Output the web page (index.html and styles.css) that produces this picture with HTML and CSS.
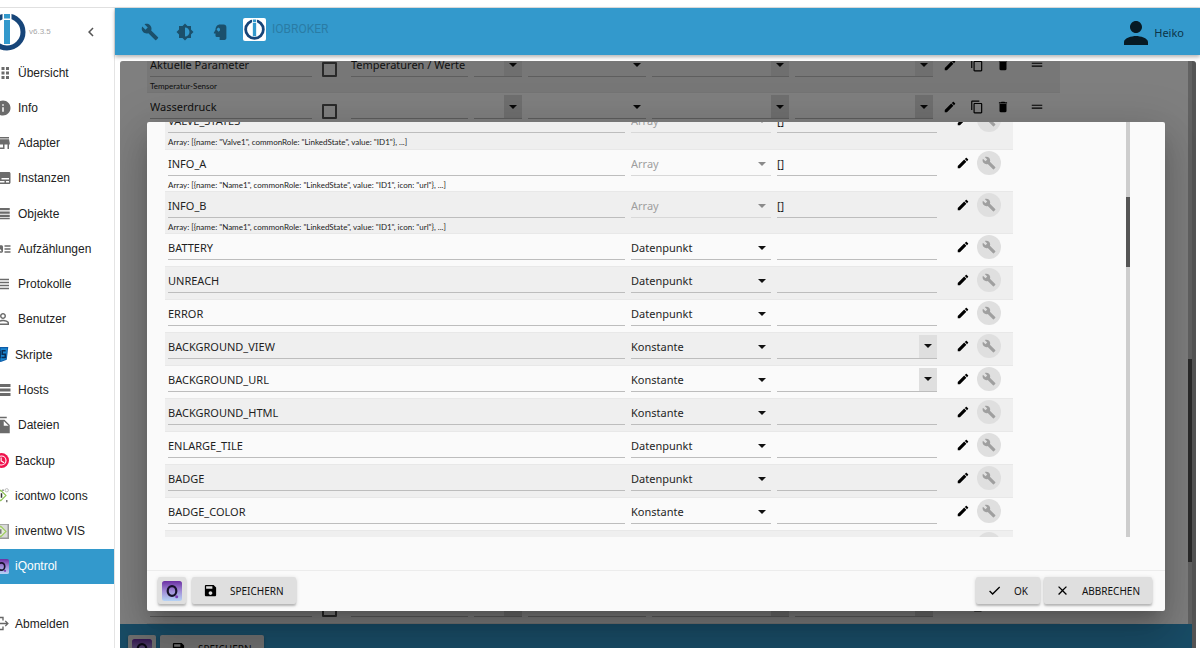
FILE: index.html
```html
<!DOCTYPE html>
<html lang="de">
<head>
<meta charset="utf-8">
<title>ioBroker – iQontrol</title>
<link rel="stylesheet" href="styles.css">
</head>
<body>
<svg class="sprite" aria-hidden="true">
  <defs>
    <linearGradient id="violet" x1="0" y1="0" x2="0" y2="1"><stop offset="0" stop-color="#6b2fa3"/><stop offset=".5" stop-color="#a08bd6"/><stop offset="1" stop-color="#b5d3f5"/></linearGradient>
  </defs>
  <symbol id="wrench" viewBox="0 0 24 24"><path d="M22.7 19l-9.1-9.1c.9-2.3.4-5-1.5-6.9-2-2-5-2.4-7.4-1.3L9 6 6 9 1.6 4.7C.4 7.1.9 10.1 2.9 12.1c1.9 1.9 4.6 2.4 6.9 1.5l9.1 9.1c.4.4 1 .4 1.4 0l2.3-2.3c.5-.4.5-1.1.1-1.4z"/></symbol>
  <symbol id="pencil" viewBox="0 0 24 24"><path d="M3 17.25V21h3.75L17.81 9.94l-3.75-3.75L3 17.25zM20.71 7.04c.39-.39.39-1.02 0-1.41l-2.34-2.34c-.39-.39-1.02-.39-1.41 0l-1.83 1.83 3.75 3.75 1.83-1.83z"/></symbol>
  <symbol id="copy" viewBox="0 0 24 24"><path d="M16 1H4c-1.1 0-2 .9-2 2v14h2V3h12V1zm3 4H8c-1.1 0-2 .9-2 2v14c0 1.1.9 2 2 2h11c1.1 0 2-.9 2-2V7c0-1.1-.9-2-2-2zm0 16H8V7h11v14z"/></symbol>
  <symbol id="trash" viewBox="0 0 24 24"><path d="M6 19c0 1.1.9 2 2 2h8c1.1 0 2-.9 2-2V7H6v12zM19 4h-3.500l-1-1h-5l-1 1H5v2h14V4z"/></symbol>
  <symbol id="drag" viewBox="0 0 24 24"><path d="M21 8H3v2h18V8zM3 15h18v-2H3v2z"/></symbol>
  <symbol id="save" viewBox="0 0 24 24"><path d="M17 3H5c-1.110 0-2 .9-2 2v14c0 1.100.890 2 2 2h14c1.100 0 2-.9 2-2V7l-4-4zm-5 16c-1.660 0-3-1.340-3-3s1.340-3 3-3 3 1.340 3 3-1.340 3-3 3zm3-10H5V5h10v4z"/></symbol>
  <symbol id="check" viewBox="0 0 24 24"><path d="M9 16.170L4.830 12l-1.420 1.410L9 19 21 7l-1.410-1.410z"/></symbol>
  <symbol id="close" viewBox="0 0 24 24"><path d="M19 6.410L17.590 5 12 10.590 6.410 5 5 6.410 10.590 12 5 17.590 6.410 19 12 13.410 17.590 19 19 17.590 13.410 12z"/></symbol>
  <symbol id="person" viewBox="0 0 24 24"><path d="M12 12c2.210 0 4-1.790 4-4s-1.790-4-4-4-4 1.790-4 4 1.790 4 4 4zm0 2c-2.670 0-8 1.340-8 4v2h16v-2c0-2.660-5.330-4-8-4z"/></symbol>
  <symbol id="iobroker" viewBox="0 0 38 38"><circle cx="19" cy="19" r="16" fill="none" stroke="#174579" stroke-width="5"/><path d="M14.500 0h9v30h-9z" fill="#fff"/><path d="M16 1h6v4.500h-6zM16 7h6v24h-6z" fill="#3399cc"/></symbol>
  <symbol id="iqontrol" viewBox="0 0 20 20"><rect width="20" height="20" rx="2.500" fill="url(#violet)"/><ellipse cx="10" cy="10" rx="4.300" ry="4.900" fill="none" stroke="#17122b" stroke-width="2.200"/><circle cx="14.700" cy="15.800" r="1.500" fill="#7a3fb5"/></symbol>
</svg>

<div class="topline"></div>
<div class="app">
  <aside class="side">
    <div class="brand">
      <svg class="brand-logo"><use href="#iobroker"/></svg>
      <span class="version">v6.3.5</span>
      <button class="collapse" aria-label="Menü schließen"><svg viewBox="0 0 24 24"><path d="M15.410 7.410L14 6l-6 6 6 6 1.410-1.410L10.830 12z"/></svg></button>
    </div>
    <nav class="nav">
      <a href="#"><svg viewBox="0 0 24 24"><path d="M4 4h4v4H4zM10 4h4v4h-4zM16 4h4v4h-4zM4 10h4v4H4zM10 10h4v4h-4zM16 10h4v4h-4zM4 16h4v4H4zM10 16h4v4h-4zM16 16h4v4h-4z"/></svg>Übersicht</a>
      <a href="#"><svg viewBox="0 0 24 24"><path d="M12 2C6.480 2 2 6.480 2 12s4.480 10 10 10 10-4.480 10-10S17.520 2 12 2zm1 15h-2v-6h2v6zm0-8h-2V7h2v2z"/></svg>Info</a>
      <a href="#"><svg viewBox="0 0 24 24"><path d="M20 4H4v2h16V4zm1 10v-2l-1-5H4l-1 5v2h1v6h10v-6h4v6h2v-6h1zm-9 4H6v-4h6v4z"/></svg>Adapter</a>
      <a href="#"><svg viewBox="0 0 24 24"><path d="M20 4H4c-1.100 0-2 .9-2 2v12c0 1.100.9 2 2 2h16c1.100 0 2-.9 2-2V6c0-1.100-.9-2-2-2zM4 12h4v2H4v-2zm10 6H4v-2h10v2zm6 0h-4v-2h4v2zm0-4H10v-2h10v2z"/></svg>Instanzen</a>
      <a href="#"><svg viewBox="0 0 24 24"><path d="M2 4h19v3H2zM2 8.500h19v3H2zM2 13h19v3H2zM2 17h19v2H2z"/></svg>Objekte</a>
      <a href="#"><svg viewBox="0 0 24 24"><path d="M22 13h-8v-2h8v2zm0-6h-8v2h8V7zm-8 10h8v-2h-8v2zm-2-8v6c0 1.100-.9 2-2 2H4c-1.100 0-2-.9-2-2V9c0-1.100.9-2 2-2h6c1.100 0 2 .9 2 2zm-1.500 6l-2.250-3-1.750 2.260-1.250-1.510L3.500 15h7z"/></svg>Aufzählungen</a>
      <a href="#"><svg viewBox="0 0 24 24"><path d="M4 15h16v-2H4v2zm0 4h16v-2H4v2zm0-8h16V9H4v2zm0-6v2h16V5H4z"/></svg>Protokolle</a>
      <a href="#"><svg viewBox="0 0 24 24"><path d="M12 5.900c1.160 0 2.100.940 2.100 2.100s-.940 2.100-2.100 2.100S9.900 9.160 9.900 8s.940-2.100 2.100-2.100m0 9c2.970 0 6.100 1.460 6.100 2.100v1.100H5.900V17c0-.640 3.130-2.100 6.100-2.100M12 4C9.790 4 8 5.790 8 8s1.790 4 4 4 4-1.790 4-4-1.790-4-4-4zm0 9c-2.670 0-8 1.340-8 4v3h16v-3c0-2.660-5.330-4-8-4z"/></svg>Benutzer</a>
      <a href="#" class="plugin"><svg viewBox="0 0 20 20"><path d="M0 0h19l-2 17-8 3-8-3z" fill="#0d5ca8"/><path d="M9 1.500h8.500l-1.500 14.500-7 2.500z" fill="#1b86d0"/><path d="M15.500 5h-4.500v4.500h4v4.500h-5M8 5v9H4" fill="none" stroke="#0b2c55" stroke-width="2"/></svg>Skripte</a>
      <a href="#"><svg viewBox="0 0 24 24"><path d="M2 4h20v4H2zM2 10h20v4H2zM2 16h20v4H2z"/></svg>Hosts</a>
      <a href="#"><svg viewBox="0 0 24 24"><path d="M4 1h13v2H4zM4 5h10l7 7v11H4zM13 6.500V13h6.500z" fill-rule="evenodd"/></svg>Dateien</a>
      <a href="#" class="plugin"><svg viewBox="0 0 20 20"><circle cx="10" cy="10" r="10" fill="#f0134d"/><circle cx="10" cy="10" r="6" fill="none" stroke="#fff" stroke-width="1.500"/><path d="M9.500 6v4.500l4 2.500" fill="none" stroke="#fff" stroke-width="1.500"/></svg>Backup</a>
      <a href="#" class="plugin"><svg viewBox="0 0 20 20"><path d="M1 10l8-7 7 7-7 7z" fill="#fff" stroke="#8cc152" stroke-width="1.500"/><path d="M10 7v6" stroke="#333" stroke-width="2"/><circle cx="17" cy="3" r="2.200" fill="none" stroke="#aaa" stroke-width="1"/><path d="M16 16h2v3h-2zM11 2h2v2h-2z" fill="#777"/></svg>icontwo Icons</a>
      <a href="#" class="plugin"><svg viewBox="0 0 20 20"><path d="M0 0h20v20H0z" fill="#999"/><path d="M0 1h18v17H0z" fill="#d9d9d9"/><path d="M1 10l8-7 7 7-7 7z" fill="#e6eadf" stroke="#9ccc5a" stroke-width="1.500"/><path d="M9 7v6" stroke="#777" stroke-width="2"/></svg>inventwo VIS</a>
      <a href="#" class="plugin active" aria-current="page"><svg><use href="#iqontrol"/></svg>iQontrol</a>
    </nav>
    <a href="#" class="logout plugin"><svg viewBox="0 0 20 20"><path d="M12 6V2H1v16h11v-4M7 10h11M15 6.500l3.500 3.500-3.500 3.500" fill="none" stroke="#666" stroke-width="1.800"/></svg>Abmelden</a>
  </aside>

  <main class="main">
    <header class="bar">
      <button class="tool" aria-label="Systemeinstellungen"><svg><use href="#wrench"/></svg></button>
      <button class="tool" aria-label="Farbschema"><svg viewBox="0 0 24 24"><path d="M20 15.310L23.310 12 20 8.690V4h-4.690L12 .690 8.690 4H4v4.690L.690 12 4 15.310V20h4.690L12 23.310 15.310 20H20v-4.690zM12 18V6c3.310 0 6 2.690 6 6s-2.690 6-6 6z"/></svg></button>
      <button class="tool" aria-label="Expertenmodus"><svg viewBox="0 0 24 24"><path fill-rule="evenodd" d="M12 2h5c2 0 3.500 1.500 3.500 3.500V20c0 1.500-1 2.500-2.500 2.500h-6.500v-4H7.500c-1 0-1.500-.5-1.500-1.500v-3H4.500c-.7 0-1-.6-.7-1.100L6 9C6 5 8.500 2 12 2zM8.500 7l-1 1.500 1 1.500 1.500 1.500L12 10V7.500L10 6z"/></svg></button>
      <a href="#" class="home"><svg><use href="#iobroker"/></svg></a>
      <span class="product">IOBROKER</span>
      <a href="#" class="user"><svg><use href="#person"/></svg>Heiko</a>
    </header>

    <div class="frame">
      <div class="page">
        <div class="devices">
          <table class="dev">
            <colgroup><col><col class="c-check"><col class="c-role"><col class="c-short"><col class="c-sel"><col class="c-wide"><col class="c-wider"><col class="c-edit"><col class="c-act"><col class="c-act"><col class="c-drag"></colgroup>
            <tr class="odd noted">
              <td><input aria-label="Name" value="Aktuelle Parameter"><small>Temperatur-Sensor</small></td>
              <td><input type="checkbox" aria-label="Auswahl"></td>
              <td><input aria-label="Rolle" value="Temperaturen / Werte"></td>
              <td><div class="combo"><input aria-label="Symbol"><button aria-label="Öffnen"></button></div></td>
              <td><div class="pick"><select aria-label="Typ"><option></option></select></div></td>
              <td><div class="combo"><input aria-label="Hintergrund"><button aria-label="Öffnen"></button></div></td>
              <td><div class="combo"><input aria-label="Aktiv"><button aria-label="Öffnen"></button></div></td>
              <td><button class="ico" aria-label="Bearbeiten"><svg><use href="#pencil"/></svg></button></td>
              <td><button class="ico" aria-label="Kopieren"><svg><use href="#copy"/></svg></button></td>
              <td><button class="ico" aria-label="Löschen"><svg><use href="#trash"/></svg></button></td>
              <td><button class="ico" aria-label="Verschieben"><svg><use href="#drag"/></svg></button></td>
            </tr>
            <tr class="noted">
              <td><input aria-label="Name" value="Wasserdruck"></td>
              <td><input type="checkbox" aria-label="Auswahl"></td>
              <td><input aria-label="Rolle"></td>
              <td><div class="combo"><input aria-label="Symbol"><button aria-label="Öffnen"></button></div></td>
              <td><div class="pick"><select aria-label="Typ"><option></option></select></div></td>
              <td><div class="combo"><input aria-label="Hintergrund"><button aria-label="Öffnen"></button></div></td>
              <td><div class="combo"><input aria-label="Aktiv"><button aria-label="Öffnen"></button></div></td>
              <td><button class="ico" aria-label="Bearbeiten"><svg><use href="#pencil"/></svg></button></td>
              <td><button class="ico" aria-label="Kopieren"><svg><use href="#copy"/></svg></button></td>
              <td><button class="ico" aria-label="Löschen"><svg><use href="#trash"/></svg></button></td>
              <td><button class="ico" aria-label="Verschieben"><svg><use href="#drag"/></svg></button></td>
            </tr>
          </table>
          <table class="dev">
            <colgroup><col><col class="c-check"><col class="c-role"><col class="c-short"><col class="c-sel"><col class="c-wide"><col class="c-wider"><col class="c-edit"><col class="c-act"><col class="c-act"><col class="c-drag"></colgroup>
            <tr>
              <td><input aria-label="Name"></td>
              <td><input type="checkbox" aria-label="Auswahl"></td>
              <td><input aria-label="Rolle"></td>
              <td><div class="combo"><input aria-label="Symbol"><button aria-label="Öffnen"></button></div></td>
              <td><div class="pick"><select aria-label="Typ"><option></option></select></div></td>
              <td><div class="combo"><input aria-label="Hintergrund"><button aria-label="Öffnen"></button></div></td>
              <td><div class="combo"><input aria-label="Aktiv"><button aria-label="Öffnen"></button></div></td>
              <td><button class="ico" aria-label="Bearbeiten"><svg><use href="#pencil"/></svg></button></td>
              <td><button class="ico" aria-label="Kopieren"><svg><use href="#copy"/></svg></button></td>
              <td><button class="ico" aria-label="Löschen"><svg><use href="#trash"/></svg></button></td>
              <td></td>
            </tr>
          </table>
          <i class="thumb"></i>
        </div>
        <div class="pagefoot">
          <button class="btn logo-btn" aria-label="iQontrol"><svg><use href="#iqontrol"/></svg></button>
          <button class="btn"><svg><use href="#save"/></svg>SPEICHERN</button>
        </div>
      </div>

      <div class="overlay">
        <section class="modal" role="dialog" aria-label="Gerät bearbeiten">
          <div class="scroll">
            <table class="states">
              <colgroup><col><col class="s-type"><col class="s-value"><col class="s-edit"><col class="s-tool"></colgroup>
              <tr class="odd noted">
                <td><input aria-label="Name" value="VALVE_STATES"><small>Array: [{name: "Valve1", commonRole: "LinkedState", value: "ID1"}, ...]</small></td>
                <td><div class="pick"><select aria-label="Typ" disabled><option>Array</option></select></div></td>
                <td><input aria-label="Wert" value="[]"></td>
                <td><button class="ico" aria-label="Bearbeiten"><svg><use href="#pencil"/></svg></button></td>
                <td><button class="round" aria-label="Optionen"><svg><use href="#wrench"/></svg></button></td>
              </tr>
              <tr class="noted">
                <td><input aria-label="Name" value="INFO_A"><small>Array: [{name: "Name1", commonRole: "LinkedState", value: "ID1", icon: "url"}, ...]</small></td>
                <td><div class="pick"><select aria-label="Typ" disabled><option>Array</option></select></div></td>
                <td><input aria-label="Wert" value="[]"></td>
                <td><button class="ico" aria-label="Bearbeiten"><svg><use href="#pencil"/></svg></button></td>
                <td><button class="round" aria-label="Optionen"><svg><use href="#wrench"/></svg></button></td>
              </tr>
              <tr class="odd noted">
                <td><input aria-label="Name" value="INFO_B"><small>Array: [{name: "Name1", commonRole: "LinkedState", value: "ID1", icon: "url"}, ...]</small></td>
                <td><div class="pick"><select aria-label="Typ" disabled><option>Array</option></select></div></td>
                <td><input aria-label="Wert" value="[]"></td>
                <td><button class="ico" aria-label="Bearbeiten"><svg><use href="#pencil"/></svg></button></td>
                <td><button class="round" aria-label="Optionen"><svg><use href="#wrench"/></svg></button></td>
              </tr>
              <tr>
                <td><input aria-label="Name" value="BATTERY"></td>
                <td><div class="pick"><select aria-label="Typ"><option>Datenpunkt</option></select></div></td>
                <td><input aria-label="Wert"></td>
                <td><button class="ico" aria-label="Bearbeiten"><svg><use href="#pencil"/></svg></button></td>
                <td><button class="round" aria-label="Optionen"><svg><use href="#wrench"/></svg></button></td>
              </tr>
              <tr class="odd">
                <td><input aria-label="Name" value="UNREACH"></td>
                <td><div class="pick"><select aria-label="Typ"><option>Datenpunkt</option></select></div></td>
                <td><input aria-label="Wert"></td>
                <td><button class="ico" aria-label="Bearbeiten"><svg><use href="#pencil"/></svg></button></td>
                <td><button class="round" aria-label="Optionen"><svg><use href="#wrench"/></svg></button></td>
              </tr>
              <tr>
                <td><input aria-label="Name" value="ERROR"></td>
                <td><div class="pick"><select aria-label="Typ"><option>Datenpunkt</option></select></div></td>
                <td><input aria-label="Wert"></td>
                <td><button class="ico" aria-label="Bearbeiten"><svg><use href="#pencil"/></svg></button></td>
                <td><button class="round" aria-label="Optionen"><svg><use href="#wrench"/></svg></button></td>
              </tr>
              <tr class="odd">
                <td><input aria-label="Name" value="BACKGROUND_VIEW"></td>
                <td><div class="pick"><select aria-label="Typ"><option>Konstante</option></select></div></td>
                <td><div class="combo"><input aria-label="Wert"><button aria-label="Öffnen"></button></div></td>
                <td><button class="ico" aria-label="Bearbeiten"><svg><use href="#pencil"/></svg></button></td>
                <td><button class="round" aria-label="Optionen"><svg><use href="#wrench"/></svg></button></td>
              </tr>
              <tr>
                <td><input aria-label="Name" value="BACKGROUND_URL"></td>
                <td><div class="pick"><select aria-label="Typ"><option>Konstante</option></select></div></td>
                <td><div class="combo"><input aria-label="Wert"><button aria-label="Öffnen"></button></div></td>
                <td><button class="ico" aria-label="Bearbeiten"><svg><use href="#pencil"/></svg></button></td>
                <td><button class="round" aria-label="Optionen"><svg><use href="#wrench"/></svg></button></td>
              </tr>
              <tr class="odd">
                <td><input aria-label="Name" value="BACKGROUND_HTML"></td>
                <td><div class="pick"><select aria-label="Typ"><option>Konstante</option></select></div></td>
                <td><input aria-label="Wert"></td>
                <td><button class="ico" aria-label="Bearbeiten"><svg><use href="#pencil"/></svg></button></td>
                <td><button class="round" aria-label="Optionen"><svg><use href="#wrench"/></svg></button></td>
              </tr>
              <tr>
                <td><input aria-label="Name" value="ENLARGE_TILE"></td>
                <td><div class="pick"><select aria-label="Typ"><option>Datenpunkt</option></select></div></td>
                <td><input aria-label="Wert"></td>
                <td><button class="ico" aria-label="Bearbeiten"><svg><use href="#pencil"/></svg></button></td>
                <td><button class="round" aria-label="Optionen"><svg><use href="#wrench"/></svg></button></td>
              </tr>
              <tr class="odd">
                <td><input aria-label="Name" value="BADGE"></td>
                <td><div class="pick"><select aria-label="Typ"><option>Datenpunkt</option></select></div></td>
                <td><input aria-label="Wert"></td>
                <td><button class="ico" aria-label="Bearbeiten"><svg><use href="#pencil"/></svg></button></td>
                <td><button class="round" aria-label="Optionen"><svg><use href="#wrench"/></svg></button></td>
              </tr>
              <tr>
                <td><input aria-label="Name" value="BADGE_COLOR"></td>
                <td><div class="pick"><select aria-label="Typ"><option>Konstante</option></select></div></td>
                <td><input aria-label="Wert"></td>
                <td><button class="ico" aria-label="Bearbeiten"><svg><use href="#pencil"/></svg></button></td>
                <td><button class="round" aria-label="Optionen"><svg><use href="#wrench"/></svg></button></td>
              </tr>
              <tr class="odd"><td></td><td></td><td></td><td></td>
                <td><button class="round" aria-label="Optionen"><svg><use href="#wrench"/></svg></button></td>
              </tr>
            </table>
            <i class="thumb"></i>
          </div>
          <footer class="actions">
            <button class="btn logo-btn" aria-label="iQontrol"><svg><use href="#iqontrol"/></svg></button>
            <button class="btn"><svg><use href="#save"/></svg>SPEICHERN</button>
            <span class="grow"></span>
            <button class="btn"><svg><use href="#check"/></svg>OK</button>
            <button class="btn"><svg><use href="#close"/></svg>ABBRECHEN</button>
          </footer>
        </section>
      </div>
    </div>
  </main>
</div>
</body>
</html>
```
FILE: styles.css
```css
* { box-sizing: border-box; }

body {
  margin: 0;
  height: 100vh;
  display: flex;
  flex-direction: column;
  overflow: hidden;
  background: #fff;
  font-family: "Noto Sans", "Open Sans", sans-serif;
  font-size: 11px;
  color: #1f1f1f;
}

a { color: inherit; text-decoration: none; }
svg { display: block; flex: none; fill: currentColor; }
button { font: inherit; color: inherit; border: 0; padding: 0; margin: 0; background: none; }
.sprite { position: absolute; width: 0; height: 0; }

.topline { flex: none; height: 8px; border-bottom: 1px solid #e0e0e0; }
.app { flex: 1; min-height: 0; display: flex; }

/* Sidebar */
.side {
  flex: none;
  width: 115px;
  display: flex;
  flex-direction: column;
  border-right: 1px solid #e4e4e4;
  font-family: "Liberation Sans", Arial, sans-serif;
  font-size: 12px;
  overflow: hidden;
}
.brand { height: 47px; flex: none; display: flex; align-items: center; }
.brand-logo { width: 38px; height: 38px; margin-left: -12px; }
.version { margin-left: 3px; font-size: 8px; color: #a8a8a8; }
.collapse { margin-left: auto; margin-right: 14px; color: #555; }
.collapse svg { width: 18px; height: 18px; }
.nav { flex: 1; min-height: 0; display: flex; flex-direction: column; }
.nav a { flex: 1; min-height: 0; display: flex; align-items: center; gap: 6px; }
.side a { color: #222; }
.side a svg { width: 18px; height: 18px; margin-left: -6px; color: #6b6b6b; }
.side a.plugin svg { width: 15px; height: 15px; }
.nav a.active { background: #3399cc; color: #fff; }
.logout { flex: none; display: flex; align-items: center; gap: 6px; height: 35px; margin: 22px 0 7px; }

/* Main column */
.main { flex: 1; min-width: 0; display: flex; flex-direction: column; }
.bar {
  flex: none;
  height: 47px;
  display: flex;
  align-items: center;
  padding: 0 16px 0 26px;
  background: #3399cc;
  box-shadow: 0 2px 4px rgba(0, 0, 0, .3);
}
.tool { width: 18px; margin-right: 17px; color: #1b506b; }
.tool svg { width: 18px; height: 18px; }
.home { padding: 1px; margin: 0 6px 4px -3px; background: #fff; border-radius: 2px; }
.home svg { width: 21px; height: 21px; }
.product { margin-bottom: 5px; font-family: Roboto, sans-serif; font-size: 12px; color: #2a7ca5; }
.user { margin: 2px 0 0 auto; display: flex; align-items: center; color: #0d3448; }
.user svg { width: 36px; height: 36px; color: #071a24; }

.frame {
  flex: 1;
  min-height: 0;
  position: relative;
  margin: 6px 4px 0 5px;
  padding-right: 4px;
  background: #aaa;
  border-radius: 3px 3px 0 0;
  overflow: hidden;
}
.page { height: 100%; display: flex; flex-direction: column; }
.devices {
  flex: 1;
  min-height: 0;
  position: relative;
  display: flex;
  flex-direction: column;
  justify-content: space-between;
  padding: 0 31px 0 27px;
  border-right: 4px solid #c4c4c4;
  background: #fff;
}
.devices .thumb { position: absolute; right: -4px; top: 53%; width: 4px; height: 36%; background: #555; }
.pagefoot { flex: none; height: 24px; display: flex; gap: 4px; padding: 11px 8px 0; background: #3399cc; }

/* Field rows shared by both tables */
table { width: 100%; border-collapse: collapse; table-layout: fixed; }
tr { height: 33px; border-bottom: 1px solid #e8e8e8; }
tr.odd { background: #efefef; }
tr.noted { height: 42px; }
td { padding: 2px 3px 0; vertical-align: top; white-space: nowrap; }
input, select {
  display: block;
  width: 100%;
  height: 24px;
  margin: 0;
  padding: 0;
  border: 0;
  border-bottom: 1px solid #bdbdbd;
  border-radius: 0;
  background: transparent;
  color: #1f1f1f;
  font: inherit;
  appearance: none;
}
select:disabled { color: #9e9e9e; border-color: #d8d8d8; opacity: 1; }
small { display: block; font-family: Lato, sans-serif; font-size: 8px; line-height: 12px; padding-top: 3px; color: #222; }
.pick { position: relative; }
.pick::after, .combo button::after {
  content: "";
  display: block;
  border: 4px solid transparent;
  border-top-color: #111;
  border-bottom: 0;
}
.pick::after { position: absolute; right: 5px; top: 10px; }
.pick:has(:disabled)::after { border-top-color: #8a8a8a; }
.combo { display: flex; border-bottom: 1px solid #bdbdbd; }
.combo input { flex: 1; min-width: 0; height: 23px; border: 0; }
.combo button { width: 18px; display: grid; place-items: center; background: #dfdfdf; }
.ico { display: block; height: 24px; margin: 0 auto; color: #000; }
.ico svg { width: 14px; height: 14px; }

.dev { max-width: 913px; margin-top: -10px; }
.dev + .dev { margin: 0; }
.dev tr.noted { height: 41px; }
.dev td:first-child { padding-right: 5px; }
.dev input[type="checkbox"] { width: 15px; height: 15px; margin: 9px 0 0 2px; border: 2px solid #555; border-radius: 1px; }
.dev td:last-child { padding-right: 6px; }
.c-check { width: 31px; }
.c-role { width: 123px; }
.c-short { width: 54px; }
.c-sel { width: 124px; }
.c-wide { width: 143px; }
.c-wider { width: 144px; }
.c-edit { width: 28px; }
.c-act { width: 26px; }
.c-drag { width: 44px; }

/* Dialog */
.overlay { position: absolute; inset: 0; padding: 61px 31px 37px 27px; background: rgba(0, 0, 0, .5); }
.modal {
  height: 100%;
  display: flex;
  flex-direction: column;
  background: #fafafa;
  border-radius: 2px;
  box-shadow: 0 24px 38px 3px rgba(0, 0, 0, .14), 0 9px 46px 8px rgba(0, 0, 0, .12), 0 11px 15px -7px rgba(0, 0, 0, .2);
}
.scroll {
  flex: 1;
  min-height: 0;
  position: relative;
  margin: 0 35px 33px 18px;
  border-right: 4px solid #cdcdcd;
  overflow: clip;
  overflow-clip-margin: border-box;
}
.scroll .thumb { position: absolute; right: -4px; top: 18%; width: 4px; height: 17%; background: #555; }
.states { max-width: 848px; margin-top: -15px; }
.s-type { width: 146px; }
.s-value { width: 167px; }
.s-edit { width: 36px; }
.s-tool { width: 36px; }
.states td:nth-child(3) { padding-right: 4px; }
.states td:nth-child(4) { padding: 1px 0 0 8px; }
.states td:nth-child(5) { padding: 1px 0 0; }
.round { width: 24px; height: 24px; display: grid; place-items: center; border-radius: 50%; background: #dfdfdf; color: #9f9f9f; }
.round svg { width: 14px; height: 14px; }

.actions { flex: none; display: flex; gap: 4px; padding: 6px 13px 7px 11px; border-top: 1px solid #ececec; }
.grow { flex: 1; }
.btn {
  height: 27px;
  display: flex;
  align-items: center;
  gap: 12px;
  padding: 0 12px 0 11px;
  border-radius: 2px;
  background: #dfdfdf;
  box-shadow: 0 2px 2px rgba(0, 0, 0, .2), 0 1px 4px rgba(0, 0, 0, .15);
  font-size: 10px;
  color: #111;
}
.btn svg { width: 15px; height: 15px; color: #000; }
.logo-btn { padding: 0 4px; margin-right: 2px; }
.logo-btn svg { width: 20px; height: 20px; }
.pagefoot .logo-btn { margin-right: 0; }
```
